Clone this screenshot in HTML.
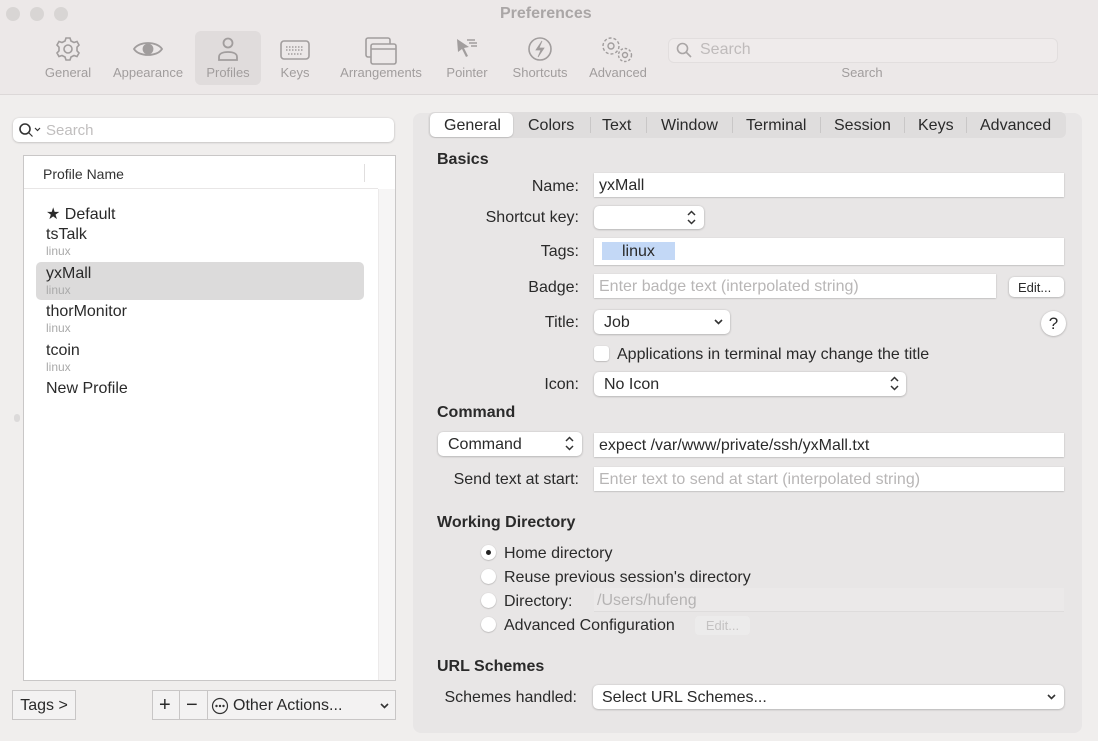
<!DOCTYPE html>
<html><head><meta charset="utf-8"><style>
*{box-sizing:border-box;margin:0;padding:0}
body{width:1098px;height:741px;overflow:hidden;background:#f0eeed;font-family:"Liberation Sans",sans-serif;color:#2a2a2a;position:relative}
.a{position:absolute;white-space:nowrap}
.t{padding-top:1px}
.tb{position:absolute;left:0;top:0;width:1098px;height:95px;background:#ece8e8;border-bottom:1px solid #dcd8d8}
.dot{position:absolute;top:7px;width:14px;height:14px;border-radius:50%;background:#d8d5d4}
.lbl{position:absolute;top:65px;font-size:13px;color:#a19d9d;transform:translateX(-50%)}
.ic{position:absolute;top:36px}
.f{position:absolute;background:#fff;box-shadow:0 0.5px 1.5px rgba(0,0,0,.25);font-size:16px;line-height:26px;padding-left:5px}
.pop{position:absolute;background:#fff;border-radius:5px;box-shadow:0 0.5px 2px rgba(0,0,0,.3);font-size:16px;line-height:26px;padding-left:10px}
.r{text-align:right;font-size:16px;padding-top:1px}
.h{font-weight:bold;font-size:16px;padding-top:1px}
.rad{position:absolute;width:15px;height:15px;border-radius:50%;background:#fff;box-shadow:0 0.5px 1.5px rgba(0,0,0,.3)}
.ph{color:#b8b6b6}
</style></head><body>
<div class="tb"></div>
<div class="dot" style="left:6px"></div><div class="dot" style="left:30px"></div><div class="dot" style="left:54px"></div>
<div class="a" style="left:500px;top:5px;font-size:16px;font-weight:bold;color:#aaa6a6">Preferences</div>
<div class="a" style="left:195px;top:31px;width:66px;height:54px;background:#e0dcdc;border-radius:6px"></div>
<svg class="ic" style="left:55px" width="26" height="26" viewBox="0 0 26 26" fill="none" stroke="#a19d9d" stroke-width="1.6"><circle cx="13" cy="13" r="4"/><path d="M11 2h4l1 3 3 1.5 3-1 2 3.5-2 2.2v3.6l2 2.2-2 3.5-3-1-3 1.5-1 3h-4l-1-3-3-1.5-3 1-2-3.5 2-2.2v-3.6l-2-2.2 2-3.5 3 1 3-1.5z"/></svg>
<svg class="ic" style="left:132px" width="32" height="26" viewBox="0 0 32 26" fill="none" stroke="#a19d9d" stroke-width="1.8"><path d="M2 13C7 5 25 5 30 13 25 21 7 21 2 13z"/><circle cx="16" cy="13" r="4.5" fill="#a19d9d"/></svg>
<svg class="ic" style="left:216px" width="24" height="26" viewBox="0 0 24 26" fill="none" stroke="#a19d9d" stroke-width="1.8"><circle cx="12" cy="7" r="4.5"/><path d="M3 24v-3c0-3 3-5 9-5s9 2 9 5v3z"/></svg>
<svg class="ic" style="left:280px;top:40px" width="30" height="20" viewBox="0 0 30 20" fill="none" stroke="#a19d9d" stroke-width="1.6"><rect x="1" y="1" width="28" height="18" rx="3"/><path d="M6 7h18M6 10h18M8 14h14" stroke-dasharray="1.5 1.5"/></svg>
<svg class="ic" style="left:365px;top:37px" width="32" height="28" viewBox="0 0 32 28" fill="none" stroke="#a19d9d" stroke-width="1.6"><rect x="1" y="1" width="24" height="19" rx="2"/><rect x="6" y="7" width="25" height="20" rx="2" fill="#ece8e8"/><path d="M6 12h25"/></svg>
<svg class="ic" style="left:455px;top:37px" width="26" height="28" viewBox="0 0 26 28" fill="#a19d9d"><path d="M2 2l12 8-5 1 4 8-2 1-4-8-4 3z"/><path d="M12 3h8M14 6h8M16 9h6" stroke="#a19d9d" stroke-width="1.4"/></svg>
<svg class="ic" style="left:527px" width="26" height="26" viewBox="0 0 26 26" fill="none" stroke="#a19d9d" stroke-width="1.6"><circle cx="13" cy="13" r="11"/><path d="M15 5l-6 9h5l-3 7 6-9h-5z" fill="#a19d9d" stroke-width="0.8"/></svg>
<svg class="ic" style="left:600px;top:36px" width="36" height="28" viewBox="0 0 36 28" fill="none" stroke="#a19d9d" stroke-width="1.4"><circle cx="11" cy="10" r="3"/><circle cx="11" cy="10" r="8" stroke-dasharray="3 2"/><circle cx="25" cy="19" r="2.5"/><circle cx="25" cy="19" r="6.5" stroke-dasharray="2.5 1.8"/></svg>
<div class="lbl" style="left:68px">General</div><div class="lbl" style="left:148px">Appearance</div><div class="lbl" style="left:228px">Profiles</div><div class="lbl" style="left:295px">Keys</div><div class="lbl" style="left:381px">Arrangements</div><div class="lbl" style="left:467px">Pointer</div><div class="lbl" style="left:540px">Shortcuts</div><div class="lbl" style="left:618px">Advanced</div>
<div class="a" style="left:668px;top:38px;width:390px;height:25px;border:1px solid #e2dede;border-radius:6px;background:#efebeb"></div>
<svg class="a" style="left:676px;top:42px" width="16" height="16" viewBox="0 0 16 16" fill="none" stroke="#a9a5a5" stroke-width="1.6"><circle cx="6.5" cy="6.5" r="5"/><path d="M10 10l5 5"/></svg>
<div class="a" style="left:700px;top:41px;font-size:16px;color:#bfbbbb">Search</div>
<div class="lbl" style="left:862px">Search</div>

<!-- left -->
<div class="a" style="left:13px;top:118px;width:381px;height:24px;background:#fff;border-radius:6px;box-shadow:0 0.5px 2px rgba(0,0,0,.25)"></div>
<svg class="a" style="left:18px;top:122px" width="24" height="16" viewBox="0 0 24 16" fill="none" stroke="#333" stroke-width="1.6"><circle cx="7" cy="7" r="5"/><path d="M10.5 10.5l4 4M17 6l2.5 2.5L22 6" stroke-width="1.2"/></svg>
<div class="a" style="left:46px;top:122px;font-size:15px;color:#c0bebe">Search</div>
<div class="a" style="left:23px;top:155px;width:373px;height:526px;background:#fff;border:1px solid #c9c7c7"></div>
<div class="a" style="left:378px;top:189px;width:17px;height:491px;background:#f6f5f5;border-left:1px solid #eceaea"></div>
<div class="a" style="left:24px;top:188px;width:354px;height:1px;background:#e8e6e6"></div>
<div class="a" style="left:364px;top:164px;width:1px;height:18px;background:#e0dede"></div>
<div class="a" style="left:43px;top:166px;font-size:14px;color:#333">Profile Name</div>
<div class="a" style="left:36px;top:262px;width:328px;height:38px;background:#dcdbdb;border-radius:5px"></div>
<div class="a" style="left:46px;top:204px;font-size:16px">★ Default</div>
<div class="a" style="left:46px;top:226px;font-size:16px">tsTalk</div><div class="a" style="left:46px;top:244px;font-size:12px;color:#aaa">linux</div>
<div class="a" style="left:46px;top:265px;font-size:16px">yxMall</div><div class="a" style="left:46px;top:283px;font-size:12px;color:#aaa">linux</div>
<div class="a" style="left:46px;top:303px;font-size:16px">thorMonitor</div><div class="a" style="left:46px;top:321px;font-size:12px;color:#aaa">linux</div>
<div class="a" style="left:46px;top:342px;font-size:16px">tcoin</div><div class="a" style="left:46px;top:360px;font-size:12px;color:#aaa">linux</div>
<div class="a" style="left:46px;top:380px;font-size:16px">New Profile</div>
<div class="a" style="left:12px;top:690px;width:64px;height:30px;border:1px solid #c8c6c6;background:#f3f2f2;font-size:16px;line-height:30px;text-align:center">Tags &gt;</div>
<div class="a" style="left:152px;top:690px;width:244px;height:30px;border:1px solid #c8c6c6;background:#f3f2f2"></div>
<div class="a" style="left:179px;top:691px;width:1px;height:28px;background:#c8c6c6"></div>
<div class="a" style="left:207px;top:691px;width:1px;height:28px;background:#c8c6c6"></div>
<div class="a" style="left:159px;top:694px;font-size:20px">+</div>
<div class="a" style="left:186px;top:694px;font-size:20px">−</div>
<svg class="a" style="left:211px;top:697px" width="18" height="18" viewBox="0 0 18 18" fill="none" stroke="#333" stroke-width="1.2"><circle cx="9" cy="9" r="7.5"/><circle cx="5.5" cy="9" r=".6" fill="#333"/><circle cx="9" cy="9" r=".6" fill="#333"/><circle cx="12.5" cy="9" r=".6" fill="#333"/></svg>
<div class="a" style="left:233px;top:697px;font-size:16px">Other Actions...</div>
<svg class="a" style="left:380px;top:703px" width="9" height="6" viewBox="0 0 9 6" fill="none" stroke="#333" stroke-width="1.6"><path d="M1 1l3.5 3.5L8 1"/></svg>

<!-- right panel -->
<div class="a" style="left:413px;top:113px;width:669px;height:620px;background:#e8e6e6;border-radius:8px"></div>
<div class="a" style="left:428px;top:112px;width:638px;height:26px;background:#dfdddd;border-radius:6px"></div>
<div class="a" style="left:430px;top:113px;width:83px;height:24px;background:#fff;border-radius:5px;box-shadow:0 0.5px 1.5px rgba(0,0,0,.25)"></div>
<div class="a" style="left:444px;top:117px;font-size:16px">General</div>
<div class="a" style="left:528px;top:117px;font-size:16px">Colors</div>
<div class="a" style="left:602px;top:117px;font-size:16px">Text</div>
<div class="a" style="left:661px;top:117px;font-size:16px">Window</div>
<div class="a" style="left:746px;top:117px;font-size:16px">Terminal</div>
<div class="a" style="left:834px;top:117px;font-size:16px">Session</div>
<div class="a" style="left:918px;top:117px;font-size:16px">Keys</div>
<div class="a" style="left:980px;top:117px;font-size:16px">Advanced</div>
<div class="a" style="left:590px;top:117px;width:1px;height:16px;background:#c9c7c7"></div>
<div class="a" style="left:646px;top:117px;width:1px;height:16px;background:#c9c7c7"></div>
<div class="a" style="left:732px;top:117px;width:1px;height:16px;background:#c9c7c7"></div>
<div class="a" style="left:820px;top:117px;width:1px;height:16px;background:#c9c7c7"></div>
<div class="a" style="left:904px;top:117px;width:1px;height:16px;background:#c9c7c7"></div>
<div class="a" style="left:966px;top:117px;width:1px;height:16px;background:#c9c7c7"></div>

<div class="a h" style="left:437px;top:150px">Basics</div>
<div class="a r" style="right:519px;top:177px">Name:</div>
<div class="f" style="left:594px;top:173px;width:470px;height:24px">yxMall</div>
<div class="a r" style="right:519px;top:208px">Shortcut key:</div>
<div class="pop" style="left:594px;top:206px;width:110px;height:23px"></div>
<svg class="a" style="left:687px;top:210px" width="9" height="15" viewBox="0 0 9 15" fill="none" stroke="#333" stroke-width="1.5"><path d="M1 5l3.5-3.5L8 5M1 10l3.5 3.5L8 10"/></svg>
<div class="a r" style="right:519px;top:242px">Tags:</div>
<div class="f" style="left:594px;top:238px;width:470px;height:27px"></div>
<div class="a" style="left:602px;top:242px;width:73px;height:18px;background:#c3d8f6"></div>
<div class="a" style="left:622px;top:243px;font-size:16px">linux</div>
<div class="a r" style="right:519px;top:278px">Badge:</div>
<div class="f ph" style="left:594px;top:274px;width:402px;height:24px">Enter badge text (interpolated string)</div>
<div class="pop" style="left:1009px;top:277px;width:55px;height:20px;font-size:13px;line-height:21px;padding-left:9px">Edit...</div>
<div class="a r" style="right:519px;top:313px">Title:</div>
<div class="pop" style="left:594px;top:310px;width:136px;height:24px">Job</div>
<svg class="a" style="left:714px;top:319px" width="9" height="6" viewBox="0 0 9 6" fill="none" stroke="#333" stroke-width="1.6"><path d="M1 1l3.5 3.5L8 1"/></svg>
<div class="a" style="left:1041px;top:311px;width:25px;height:25px;border-radius:50%;background:#fff;box-shadow:0 0.5px 2px rgba(0,0,0,.3);text-align:center;font-size:17px;line-height:26px">?</div>
<div class="a" style="left:594px;top:346px;width:15px;height:15px;border-radius:3px;background:#fff;box-shadow:0 0.5px 1.5px rgba(0,0,0,.3)"></div>
<div class="a" style="left:617px;top:346px;font-size:16px">Applications in terminal may change the title</div>
<div class="a r" style="right:519px;top:375px">Icon:</div>
<div class="pop" style="left:594px;top:372px;width:312px;height:24px">No Icon</div>
<svg class="a" style="left:890px;top:376px" width="9" height="15" viewBox="0 0 9 15" fill="none" stroke="#333" stroke-width="1.5"><path d="M1 5l3.5-3.5L8 5M1 10l3.5 3.5L8 10"/></svg>

<div class="a h" style="left:437px;top:403px">Command</div>
<div class="pop" style="left:438px;top:432px;width:144px;height:24px">Command</div>
<svg class="a" style="left:565px;top:436px" width="9" height="15" viewBox="0 0 9 15" fill="none" stroke="#333" stroke-width="1.5"><path d="M1 5l3.5-3.5L8 5M1 10l3.5 3.5L8 10"/></svg>
<div class="f" style="left:594px;top:433px;width:470px;height:24px">expect /var/www/private/ssh/yxMall.txt</div>
<div class="a r" style="right:519px;top:470px">Send text at start:</div>
<div class="f ph" style="left:594px;top:467px;width:470px;height:24px">Enter text to send at start (interpolated string)</div>

<div class="a h" style="left:437px;top:513px">Working Directory</div>
<div class="rad" style="left:481px;top:545px"></div><div class="a" style="left:486px;top:550px;width:5px;height:5px;border-radius:50%;background:#222"></div>
<div class="a" style="left:504px;top:545px;font-size:16px">Home directory</div>
<div class="rad" style="left:481px;top:569px"></div>
<div class="a" style="left:504px;top:569px;font-size:16px">Reuse previous session's directory</div>
<div class="rad" style="left:481px;top:593px"></div>
<div class="a" style="left:504px;top:593px;font-size:16px">Directory:</div>
<div class="a" style="left:594px;top:588px;width:470px;height:24px;background:#ebe9e9;border-bottom:1px solid #dedcdc;font-size:16px;line-height:26px;padding-left:3px;color:#b5b3b3">/Users/hufeng</div>
<div class="rad" style="left:481px;top:617px"></div>
<div class="a" style="left:504px;top:617px;font-size:16px">Advanced Configuration</div>
<div class="a" style="left:695px;top:616px;width:55px;height:19px;background:#ecebeb;border-radius:4px;font-size:13px;color:#c4c2c2;line-height:20px;text-align:center">Edit...</div>

<div class="a h" style="left:437px;top:657px">URL Schemes</div>
<div class="a r" style="right:521px;top:688px">Schemes handled:</div>
<div class="pop" style="left:593px;top:685px;width:471px;height:24px;padding-left:9px">Select URL Schemes...</div>
<svg class="a" style="left:1047px;top:694px" width="9" height="6" viewBox="0 0 9 6" fill="none" stroke="#333" stroke-width="1.6"><path d="M1 1l3.5 3.5L8 1"/></svg>
<div class="a" style="left:14px;top:414px;width:6px;height:8px;border-radius:3px;background:#dcdada"></div>
</body></html>
